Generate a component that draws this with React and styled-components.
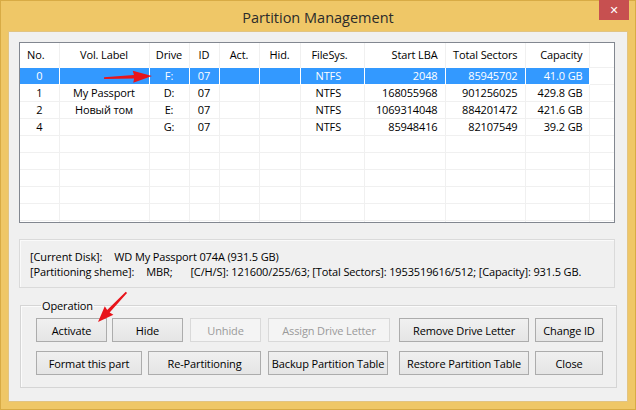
// Packages
import React from "react"
import styled, { createGlobalStyle } from "styled-components"

// Styles
const GlobalStyle = createGlobalStyle`
    html, body {
        margin: 0;
        padding: 0;
        background: #ffffff;
        overflow: hidden;
    }

    * {
        box-sizing: border-box;
    }
`

const Window = styled.div`
    position: relative;
    width: 636px;
    height: 410px;
    display: flex;
    flex-direction: column;
    background: #efc767;
    border: 1px solid #d8ab45;
    font-family: "Open Sans", "Noto Sans", sans-serif;
    font-size: 11px;
    letter-spacing: -0.13px;
    color: #000;
`

const TitleBar = styled.div`
    height: 30px;
    display: grid;
    grid-template-columns: 1fr auto 1fr;
    align-items: center;
`

const Title = styled.div`
    grid-column: 2;
    font-size: 14.5px;
    letter-spacing: 0;
    color: #2b2b2b;
    padding-top: 2px;
`

const CloseButton = styled.div`
    grid-column: 3;
    justify-self: end;
    align-self: start;
    width: 30px;
    height: 20px;
    margin-right: 6px;
    margin-top: -1px;
    background: #c75050;
    color: #fff;
    display: flex;
    align-items: center;
    justify-content: center;
    font-family: "DejaVu Sans", sans-serif;
    font-size: 11px;
    font-weight: bold;
`

const Content = styled.div`
    flex: 1;
    margin: 0 7px 7px 7px;
    background: #f0f0f0;
    border: 1px solid #e2c482;
    padding: 10px 12px 11px 10px;
    display: flex;
    flex-direction: column;
`

const ListBox = styled.div`
    height: 181px;
    background: #fff;
    border: 1px solid #828790;
    overflow: hidden;
`

const Table = styled.table`
    width: 594px;
    table-layout: fixed;
    border-collapse: collapse;
`

const Col = styled.col`
    width: ${props => props.$w}px;
`

const HeadCell = styled.th`
    height: 24px;
    padding: 0 ${props => props.$pad || 0}px;
    font-weight: normal;
    text-align: ${props => props.$align || "center"};
    border-right: 1px solid #f0f0f0;
    white-space: nowrap;
    overflow: hidden;
`

const Cell = styled.td`
    height: 17px;
    padding: 0 ${props => props.$pad || 0}px;
    line-height: 16px;
    text-align: ${props => props.$align || "center"};
    white-space: nowrap;
    overflow: hidden;
    border: 1px solid ${props => (props.$sel ? "#ffffff" : "#f0f0f0")};
    border-left: none;
    background: ${props => (props.$sel ? "#3399ff" : "transparent")};
    color: ${props => (props.$sel ? "#ffffff" : "#000")};
`

const InfoBox = styled.div`
    margin-top: 16px;
    height: 49px;
    border: 1px solid #dadada;
    box-shadow: inset 1px 1px 0 #fafafa;
    padding: 9px 10px 0 10px;
    line-height: 15px;
`

const InfoLine = styled.div`
    white-space: nowrap;
`

const Gap = styled.span`
    display: inline-block;
    width: ${props => props.$w}px;
`

const Group = styled.fieldset`
    margin: 10px -2px 0 1px;
    padding: 5px 0 12px 15px;
    border: 1px solid #d5d5d5;
    box-shadow: inset 1px 1px 0 #fbfbfb;
    display: flex;
    flex-direction: column;
    gap: 9px;
`

const Legend = styled.legend`
    padding: 0 1px;
    margin-left: 5px;
    line-height: 15px;
`

const ButtonRow = styled.div`
    display: flex;
`

const Button = styled.div`
    width: ${props => props.$w}px;
    margin-left: ${props => props.$ml || 0}px;
    height: 24px;
    display: flex;
    align-items: center;
    justify-content: center;
    white-space: nowrap;
    border: 1px solid ${props => (props.$off ? "#d9d9d9" : "#acacac")};
    background: ${props =>
        props.$off ? "#f4f4f4" : "linear-gradient(#f0f0f0, #e5e5e5)"};
    color: ${props => (props.$off ? "#9a9a9a" : "#000")};
`

const Overlay = styled.svg`
    position: absolute;
    left: 0;
    top: 0;
    width: 636px;
    height: 410px;
    pointer-events: none;
`

// Data
const columns = [
    { key: "no", title: "No.", w: 39, hAlign: "left", hPad: 7 },
    { key: "label", title: "Vol. Label", w: 90 },
    { key: "drive", title: "Drive", w: 40 },
    { key: "id", title: "ID", w: 30 },
    { key: "act", title: "Act.", w: 40 },
    { key: "hid", title: "Hid.", w: 41 },
    { key: "fs", title: "FileSys.", w: 64, align: "left", pad: 15, hAlign: "left", hPad: 11 },
    { key: "start", title: "Start LBA", w: 81, align: "right", pad: 7 },
    { key: "total", title: "Total Sectors", w: 80, align: "right", pad: 7 },
    { key: "cap", title: "Capacity", w: 64, align: "right", pad: 6 },
]

const partitions = [
    { no: "0", label: "", drive: "F:", id: "07", fs: "NTFS", start: "2048", total: "85945702", cap: "41.0 GB", selected: true },
    { no: "1", label: "My Passport", drive: "D:", id: "07", fs: "NTFS", start: "168055968", total: "901256025", cap: "429.8 GB" },
    { no: "2", label: "Новый том", drive: "E:", id: "07", fs: "NTFS", start: "1069314048", total: "884201472", cap: "421.6 GB" },
    { no: "4", label: "", drive: "G:", id: "07", fs: "NTFS", start: "85948416", total: "82107549", cap: "39.2 GB" },
]

const emptyRows = Array.from({ length: 6 }, () => ({}))

// Annotation arrow, tip at the origin, pointing along +x
function Arrow({ x, y, angle, length, head = 15, wing = 5, shaft = 1.6 }) {
    const d = `M ${-length} ${-shaft * 0.45} L ${-head} ${-shaft} L ${-head - 1} ${-wing} L 0 0 L ${-head - 1} ${wing} L ${-head} ${shaft} L ${-length} ${shaft * 0.6} Z`
    return (
        <g transform={`translate(${x} ${y}) rotate(${angle})`}>
            <path d={d} fill="#e8141b" />
        </g>
    )
}

function App() {
    return (
        <>
            <GlobalStyle />
            <Window>
                <TitleBar>
                    <Title>Partition Management</Title>
                    <CloseButton>✕</CloseButton>
                </TitleBar>

                <Content>
                    <ListBox>
                        <Table>
                            <colgroup>
                                {columns.map(c => (
                                    <Col key={c.key} $w={c.w} />
                                ))}
                                <Col $w={25} />
                            </colgroup>
                            <thead>
                                <tr>
                                    {columns.map(c => (
                                        <HeadCell key={c.key} $align={c.hAlign || c.align} $pad={c.hPad || c.pad}>
                                            {c.title}
                                        </HeadCell>
                                    ))}
                                    <HeadCell />
                                </tr>
                            </thead>
                            <tbody>
                                {[...partitions, ...emptyRows].map((row, i) => (
                                    <tr key={i}>
                                        {columns.map(c => (
                                            <Cell key={c.key} $align={c.align} $pad={c.pad} $sel={row.selected}>
                                                {row[c.key] || ""}
                                            </Cell>
                                        ))}
                                        <Cell />
                                    </tr>
                                ))}
                            </tbody>
                        </Table>
                    </ListBox>

                    <InfoBox>
                        <InfoLine>
                            [Current Disk]:<Gap $w={12} />WD My Passport 074A (931.5 GB)
                        </InfoLine>
                        <InfoLine>
                            [Partitioning sheme]:<Gap $w={12} />MBR;<Gap $w={18} />[C/H/S]: 121600/255/63; [Total Sectors]: 1953519616/512; [Capacity]: 931.5 GB.
                        </InfoLine>
                    </InfoBox>

                    <Group>
                        <Legend>Operation</Legend>
                        <ButtonRow>
                            <Button $w={71}>Activate</Button>
                            <Button $w={71} $ml={5}>Hide</Button>
                            <Button $w={71} $ml={7} $off>Unhide</Button>
                            <Button $w={122} $ml={7} $off>Assign Drive Letter</Button>
                            <Button $w={130} $ml={9}>Remove Drive Letter</Button>
                            <Button $w={68} $ml={6}>Change ID</Button>
                        </ButtonRow>
                        <ButtonRow>
                            <Button $w={106}>Format this part</Button>
                            <Button $w={113} $ml={6}>Re-Partitioning</Button>
                            <Button $w={120} $ml={7}>Backup Partition Table</Button>
                            <Button $w={130} $ml={11}>Restore Partition Table</Button>
                            <Button $w={68} $ml={6}>Close</Button>
                        </ButtonRow>
                    </Group>
                </Content>

                <Overlay viewBox="0 0 636 410">
                    <Arrow x={151} y={75} angle={-2.4} length={48} head={18} wing={6} shaft={1.8} />
                    <Arrow x={97} y={321} angle={134} length={41} head={15} wing={6} shaft={1.7} />
                </Overlay>
            </Window>
        </>
    )
}

export default App
